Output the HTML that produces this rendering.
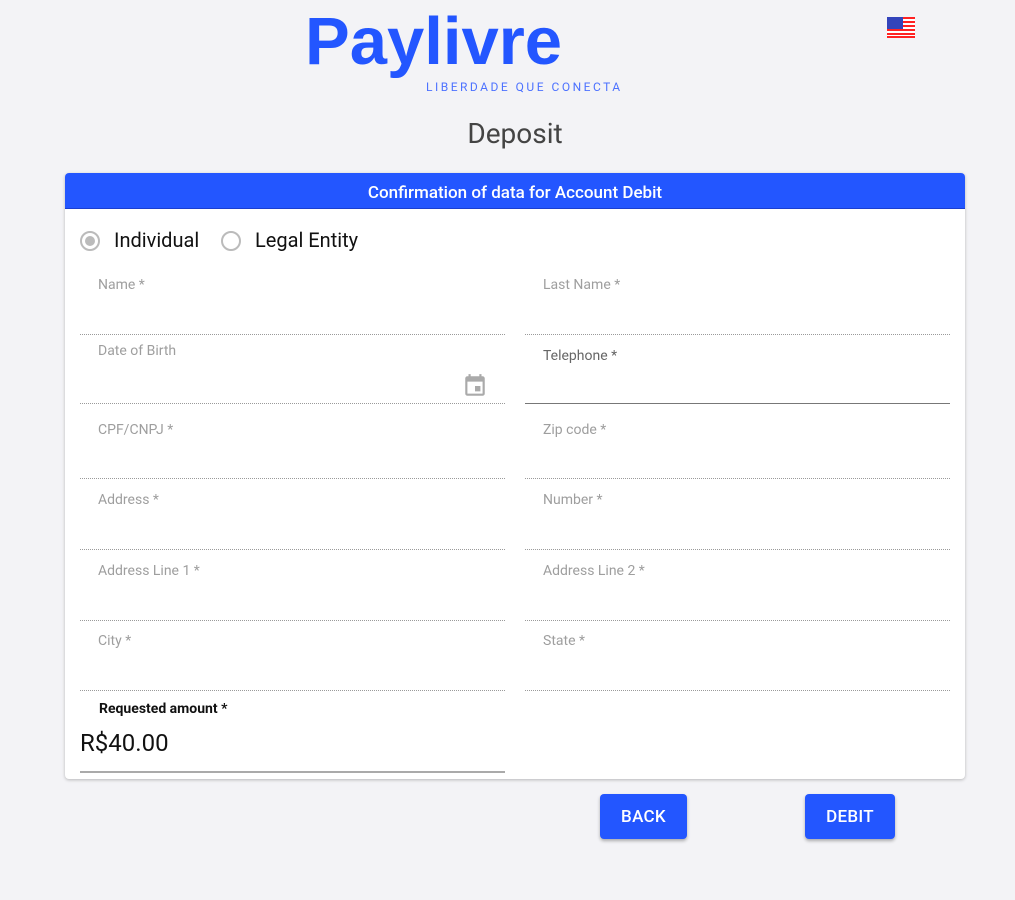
<!DOCTYPE html>
<html><head><meta charset="utf-8"><style>
*{margin:0;padding:0;box-sizing:border-box}
body{width:1015px;height:900px;background:#f3f3f6;font-family:Roboto,"Liberation Sans",sans-serif;position:relative;overflow:hidden}
.a{position:absolute}
.lbl{position:absolute;font-size:14px;color:#9e9e9e}
.ln{position:absolute;height:0;border-top:1px dotted #9a9a9a}
.btn{position:absolute;background:#2356ff;color:#fff;font-size:17px;font-weight:500;border-radius:4px;box-shadow:0 2px 3px rgba(0,0,0,.3);display:flex;align-items:center;justify-content:center;letter-spacing:.3px}
</style></head><body>
<div class="a" style="left:305px;top:2px;font-size:67px;font-weight:bold;color:#2356ff;letter-spacing:0px;line-height:80px;font-family:'Liberation Sans',sans-serif">Paylivre</div>
<div class="a" style="left:426px;top:80px;font-size:12px;color:#4d72ff;letter-spacing:2.5px">LIBERDADE QUE CONECTA</div>
<svg class="a" style="left:887px;top:17px" width="28" height="21" viewBox="0 0 28 21">
<rect width="28" height="21" fill="#fff"/>
<g fill="#f22">
<rect y="0" width="28" height="2"/><rect y="4" width="28" height="2"/><rect y="8" width="28" height="2"/><rect y="12" width="28" height="2"/><rect y="16" width="28" height="2"/><rect y="19" width="28" height="2"/></g>
<rect width="16" height="12" fill="#3344bb"/></svg>
<div class="a" style="left:0;width:1030px;top:117px;text-align:center;font-size:28px;color:#444">Deposit</div>
<div class="a" style="left:65px;top:173px;width:900px;height:606px;background:#fff;border-radius:4px;box-shadow:0 1px 3px rgba(0,0,0,.25);overflow:hidden">
<div style="height:36px;background:#2356ff;border-bottom:1px solid #1a3fd0;color:#fff;font-size:17px;font-weight:500;text-align:center;line-height:40px">Confirmation of data for Account Debit</div>
</div>
<div class="a" style="left:80px;top:231px;width:20px;height:20px;border:2px solid #bbb;border-radius:50%"></div>
<div class="a" style="left:85px;top:236px;width:10px;height:10px;background:#bbb;border-radius:50%"></div>
<div class="a" style="left:114px;top:228px;font-size:20px;color:#111">Individual</div>
<div class="a" style="left:221px;top:231px;width:20px;height:20px;border:2px solid #bbb;border-radius:50%"></div>
<div class="a" style="left:255px;top:228px;font-size:20px;color:#111">Legal Entity</div>

<div class="lbl" style="left:98px;top:277px">Name *</div>
<div class="lbl" style="left:543px;top:277px">Last Name *</div>
<div class="ln" style="left:80px;top:334px;width:425px"></div>
<div class="ln" style="left:525px;top:334px;width:425px"></div>
<div class="lbl" style="left:98px;top:343px">Date of Birth</div>
<svg class="a" style="left:462px;top:372px" width="26" height="28" viewBox="0 0 24 24"><path fill="#aaa" d="M17 12h-5v5h5v-5zM16 1v2H8V1H6v2H5a2 2 0 0 0-2 2v14a2 2 0 0 0 2 2h14a2 2 0 0 0 2-2V5a2 2 0 0 0-2-2h-1V1h-2zm3 18H5V8h14v11z"/></svg>
<div class="ln" style="left:80px;top:403px;width:425px"></div>
<div class="lbl" style="left:543px;top:348px;color:#666">Telephone *</div>
<div class="a" style="left:525px;top:403px;width:425px;height:1px;background:#777"></div>
<div class="lbl" style="left:98px;top:422px">CPF/CNPJ *</div>
<div class="lbl" style="left:543px;top:422px">Zip code *</div>
<div class="ln" style="left:80px;top:478px;width:425px"></div>
<div class="ln" style="left:525px;top:478px;width:425px"></div>
<div class="lbl" style="left:98px;top:492px">Address *</div>
<div class="lbl" style="left:543px;top:492px">Number *</div>
<div class="ln" style="left:80px;top:549px;width:425px"></div>
<div class="ln" style="left:525px;top:549px;width:425px"></div>
<div class="lbl" style="left:98px;top:563px">Address Line 1 *</div>
<div class="lbl" style="left:543px;top:563px">Address Line 2 *</div>
<div class="ln" style="left:80px;top:620px;width:425px"></div>
<div class="ln" style="left:525px;top:620px;width:425px"></div>
<div class="lbl" style="left:98px;top:633px">City *</div>
<div class="lbl" style="left:543px;top:633px">State *</div>
<div class="ln" style="left:80px;top:690px;width:425px"></div>
<div class="ln" style="left:525px;top:690px;width:425px"></div>
<div class="a" style="left:99px;top:701px;font-size:14px;font-weight:bold;color:#111">Requested amount *</div>
<div class="a" style="left:80px;top:729px;font-size:24px;color:#111">R$40.00</div>
<div class="a" style="left:80px;top:771px;width:425px;height:2px;background:#aaa"></div>

<div class="btn" style="left:600px;top:794px;width:87px;height:45px">BACK</div>
<div class="btn" style="left:805px;top:794px;width:90px;height:45px">DEBIT</div>
</body></html>
